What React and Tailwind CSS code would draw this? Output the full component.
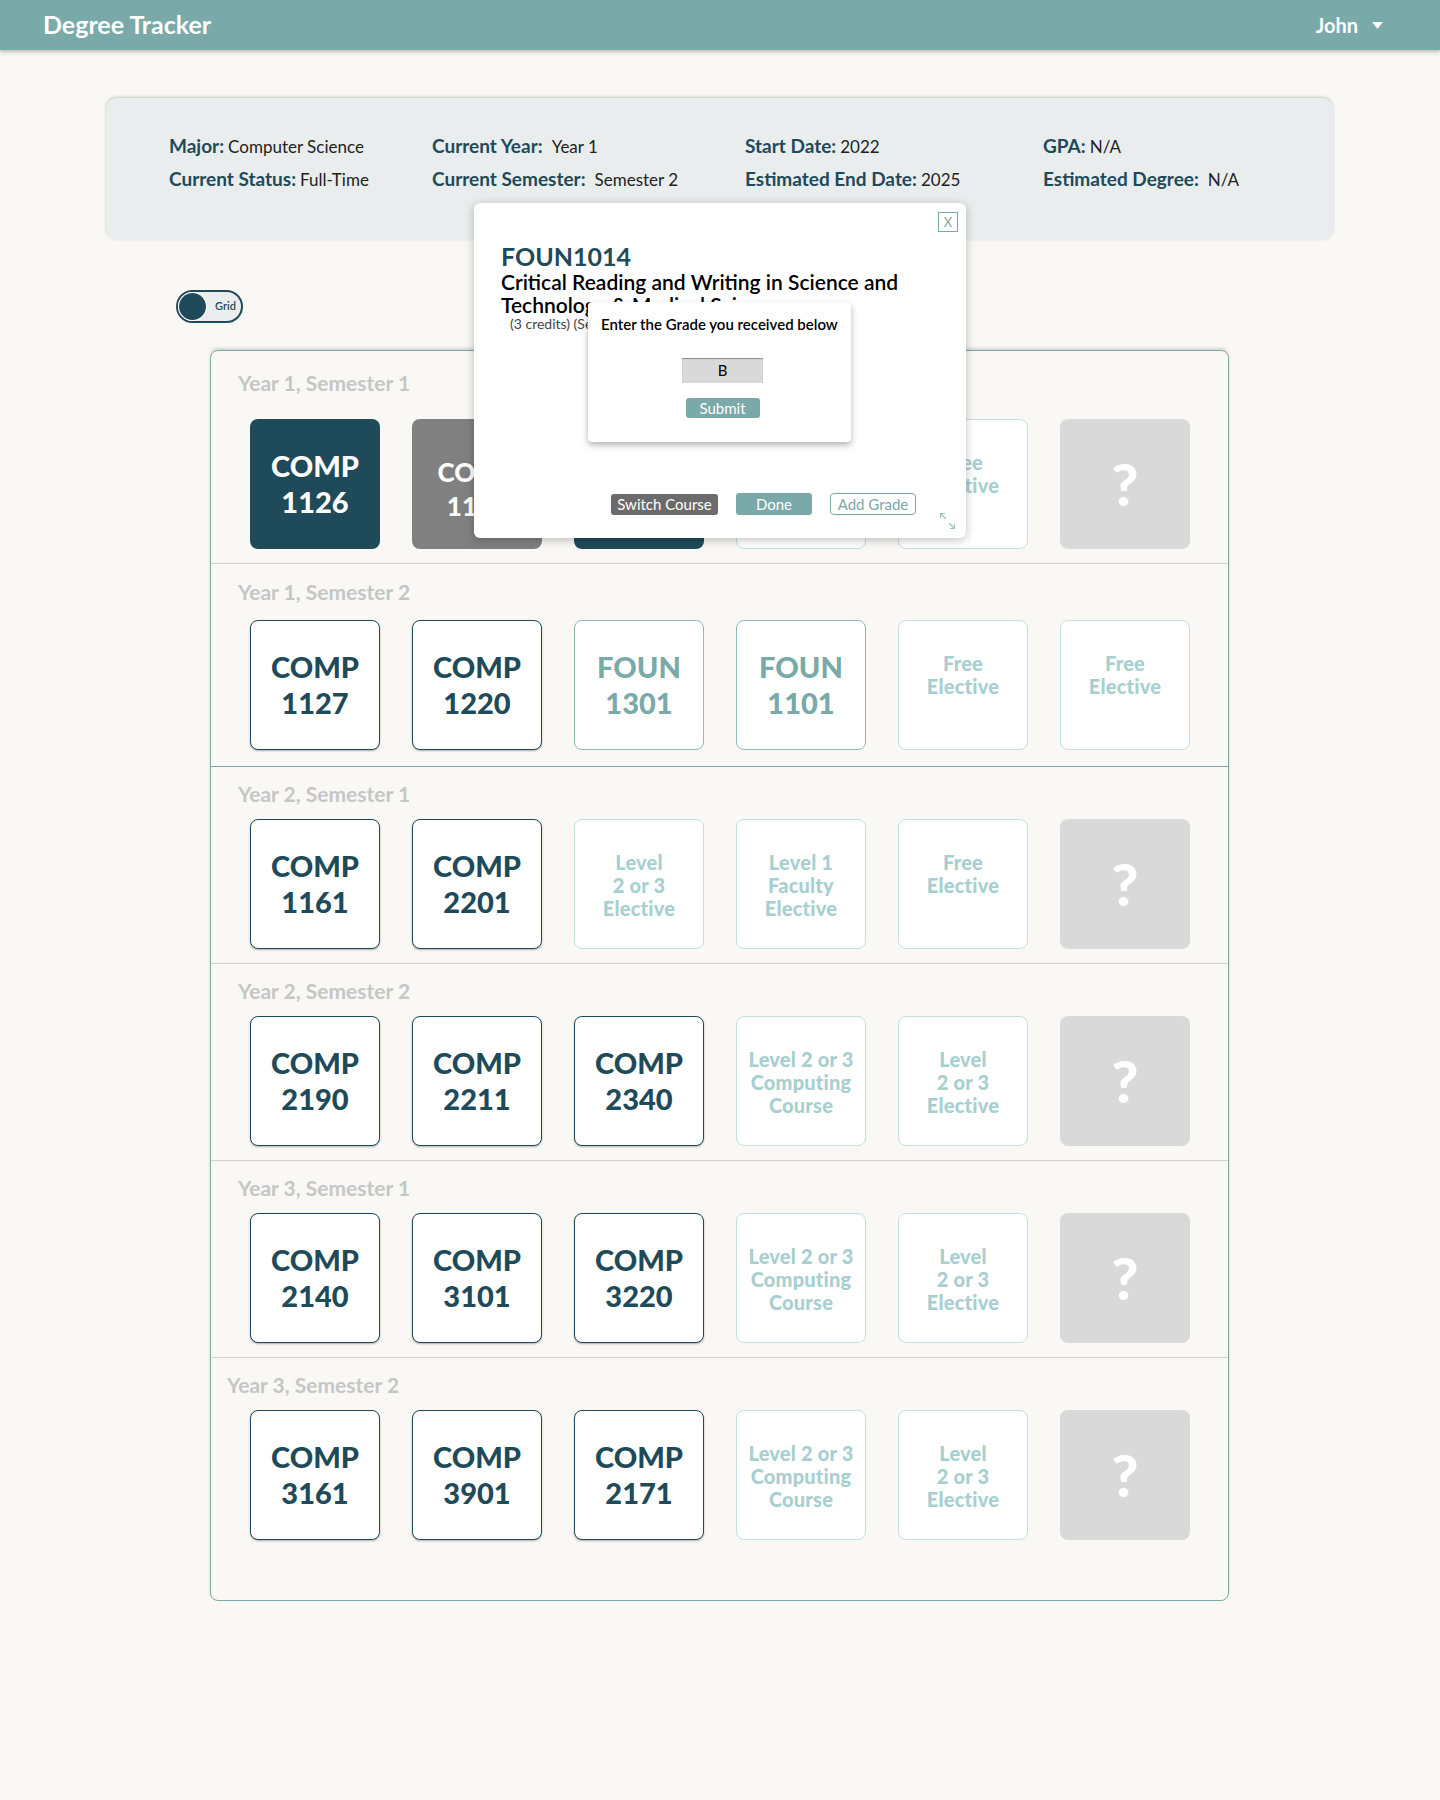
import React from "react";

const font = { fontFamily: "Lato, 'Open Sans', sans-serif" };

const semesters = [
  {
    label: "Year 1, Semester 1",
    first: true,
    cards: [
      { kind: "fill", lines: ["COMP", "1126"] },
      { kind: "gray", lines: ["COMP", "1128"] },
      { kind: "fill", lines: ["FOUN", "1014"] },
      { kind: "light", lines: ["Level 1", "Faculty", "Elective"] },
      { kind: "light", lines: ["Free", "Elective"] },
      { kind: "q" },
    ],
  },
  {
    label: "Year 1, Semester 2",
    divider: "teal",
    tall: true,
    cards: [
      { kind: "dark", lines: ["COMP", "1127"] },
      { kind: "dark", lines: ["COMP", "1220"] },
      { kind: "mid", lines: ["FOUN", "1301"] },
      { kind: "mid", lines: ["FOUN", "1101"] },
      { kind: "light", lines: ["Free", "Elective"] },
      { kind: "light", lines: ["Free", "Elective"] },
    ],
  },
  {
    label: "Year 2, Semester 1",
    cards: [
      { kind: "dark", lines: ["COMP", "1161"] },
      { kind: "dark", lines: ["COMP", "2201"] },
      { kind: "light", lines: ["Level", "2 or 3", "Elective"] },
      { kind: "light", lines: ["Level 1", "Faculty", "Elective"] },
      { kind: "light", lines: ["Free", "Elective"] },
      { kind: "q" },
    ],
  },
  {
    label: "Year 2, Semester 2",
    cards: [
      { kind: "dark", lines: ["COMP", "2190"] },
      { kind: "dark", lines: ["COMP", "2211"] },
      { kind: "dark", lines: ["COMP", "2340"] },
      { kind: "light", lines: ["Level 2 or 3", "Computing", "Course"] },
      { kind: "light", lines: ["Level", "2 or 3", "Elective"] },
      { kind: "q" },
    ],
  },
  {
    label: "Year 3, Semester 1",
    cards: [
      { kind: "dark", lines: ["COMP", "2140"] },
      { kind: "dark", lines: ["COMP", "3101"] },
      { kind: "dark", lines: ["COMP", "3220"] },
      { kind: "light", lines: ["Level 2 or 3", "Computing", "Course"] },
      { kind: "light", lines: ["Level", "2 or 3", "Elective"] },
      { kind: "q" },
    ],
  },
  {
    label: "Year 3, Semester 2",
    last: true,
    cards: [
      { kind: "dark", lines: ["COMP", "3161"] },
      { kind: "dark", lines: ["COMP", "3901"] },
      { kind: "dark", lines: ["COMP", "2171"] },
      { kind: "light", lines: ["Level 2 or 3", "Computing", "Course"] },
      { kind: "light", lines: ["Level", "2 or 3", "Elective"] },
      { kind: "q" },
    ],
  },
];

const CourseCard = ({ kind, lines = [] }) => {
  if (kind === "q") {
    return (
      <div className="w-[130px] h-[130px] rounded-[8px] bg-[#d9d9d9] flex items-center justify-center">
        <span className="text-white text-[58px] font-black leading-none">?</span>
      </div>
    );
  }
  if (kind === "light") {
    return (
      <div className="w-[130px] h-[130px] rounded-[8px] bg-white border border-[#c5dfe0] pt-[31px] flex flex-col items-center">
        {lines.map((l, i) => (
          <span key={i} className="text-[20px] leading-[23px] font-black tracking-[0.2px] text-[#a8cfd0] whitespace-nowrap">
            {l}
          </span>
        ))}
      </div>
    );
  }
  const styles = {
    fill: "bg-[#1e4a5a] text-white",
    gray: "bg-[#808080] text-white",
    dark: "bg-white border border-[#1e4a5a] text-[#1e4a5a] shadow-[0_1px_2px_rgba(0,0,0,0.3)]",
    mid: "bg-white border border-[#8fb9b9] text-[#7aa9a9]",
  };
  const small = kind === "gray";
  return (
    <div className={`w-[130px] h-[130px] rounded-[8px] flex flex-col items-center justify-center ${styles[kind]}`}>
      <div className={`flex flex-col items-center ${small ? "mt-[10px]" : ""}`}>
        {lines.map((l, i) => (
          <span
            key={i}
            className={`font-black ${small ? "text-[26px] leading-[34px]" : "text-[29px] leading-[36px]"}`}
          >
            {l}
          </span>
        ))}
      </div>
    </div>
  );
};

const Semester = ({ sem }) => {
  let pad = "pt-[15px]";
  let gap = "mb-[13px]";
  let bottom = "pb-[14px]";
  if (sem.first) {
    pad = "pt-[20px]";
    gap = "mb-[24px]";
  }
  if (sem.tall) {
    pad = "pt-[16px]";
    gap = "mb-[16px]";
    bottom = "pb-[16px]";
  }
  if (sem.last) bottom = "pb-[60px]";
  const border = sem.last
    ? ""
    : sem.divider === "teal"
    ? "border-b border-[#7aa9a9]"
    : "border-b border-[#d3d1cc]";
  return (
    <div className={`${pad} ${bottom} ${border}`}>
      <div
        className={`text-[21px] leading-[24px] font-bold text-[#c6c6c6] ${gap} ${
          sem.last ? "pl-[16px]" : "pl-[27px]"
        }`}
      >
        {sem.label}
      </div>
      <div className="flex gap-x-[32px] pl-[39px]">
        {sem.cards.map((c, i) => (
          <CourseCard key={i} {...c} />
        ))}
      </div>
    </div>
  );
};

const Info = ({ label, value, gap }) => (
  <div className="flex items-baseline whitespace-nowrap leading-[24px]">
    <span className="text-[19px] font-bold text-[#1e4a5a]">{label}</span>
    <span className={`text-[17px] text-[#222] ${gap ? "ml-[9px]" : "ml-[4px]"}`}>{value}</span>
  </div>
);

const ExpandIcon = () => (
  <svg width="17" height="18" viewBox="0 0 17 18" fill="none" stroke="#9cc3c3" strokeWidth="1.2" strokeLinecap="round">
    <path d="M1.5 1.5 L6.5 6.5" />
    <path d="M1.5 1.5 L1.5 5.5" />
    <path d="M1.5 1.5 L5.5 1.5" />
    <path d="M10.5 11.5 L15.5 16.5" />
    <path d="M15.5 16.5 L15.5 12.5" />
    <path d="M15.5 16.5 L11.5 16.5" />
  </svg>
);

const CourseModal = () => (
  <div className="absolute left-[474px] top-[203px] w-[492px] h-[335px] bg-white rounded-[6px] shadow-[0_2px_10px_rgba(0,0,0,0.25)] z-20 flex flex-col">
    <button className="absolute top-[9px] right-[8px] w-[20px] h-[20px] border border-[#7aa9a9] text-[#7aa9a9] text-[13px] leading-none flex items-center justify-center">
      X
    </button>

    <div className="pl-[27px] pt-[40px]">
      <div className="text-[25px] leading-[26px] font-bold text-[#1e4a5a]">FOUN1014</div>
      <div className="text-[21px] leading-[23px] font-semibold text-black mt-[1px]">
        Critical Reading and Writing in Science and
        <br />
        Technology &amp; Medical Sciences
      </div>
      <div className="ml-[9px] text-[14px] leading-[15px] text-[#444]">(3 credits) (Semester 1)</div>
    </div>

    <div className="absolute left-[114px] top-[99px] w-[263px] h-[140px] bg-white rounded-[4px] shadow-[0_3px_6px_rgba(0,0,0,0.3)] flex flex-col items-center pt-[12px]">
      <div className="w-full pl-[13px] text-[15px] leading-[20px] font-semibold text-black whitespace-nowrap">
        Enter the Grade you received below
      </div>
      <div className="mt-[24px] ml-[6px] w-[81px] h-[25px] bg-[#d9d9d9] shadow-[inset_0_1px_1px_rgba(0,0,0,0.35)] flex items-center justify-center text-[15px] text-black">
        B
      </div>
      <button className="mt-[15px] ml-[6px] w-[74px] h-[20px] rounded-[3px] bg-[#7aa9a9] text-white text-[15px] leading-none">
        Submit
      </button>
    </div>

    <div className="mt-auto pb-[23px] pl-[137px] flex items-center gap-[18px]">
      <button className="w-[107px] h-[21px] rounded-[3px] bg-[#6b6b6b] text-white text-[15px] leading-none whitespace-nowrap">
        Switch Course
      </button>
      <button className="w-[76px] h-[22px] rounded-[3px] bg-[#7aa9a9] text-white text-[15px] leading-none">
        Done
      </button>
      <button className="w-[86px] h-[22px] rounded-[4px] border border-[#7aa9a9] bg-white text-[#7aa9a9] text-[15px] leading-none whitespace-nowrap">
        Add Grade
      </button>
    </div>

    <div className="absolute right-[10px] bottom-[8px]">
      <ExpandIcon />
    </div>
  </div>
);

const App = () => {
  return (
    <div className="relative min-h-screen bg-[#f9f8f5]" style={font}>
      <header className="h-[50px] bg-[#7aa9a9] shadow-[0_2px_4px_rgba(0,0,0,0.25)] flex items-center justify-between pl-[43px] pr-[57px]">
        <span className="text-white text-[25px] font-bold">Degree Tracker</span>
        <span className="flex items-center gap-[14px] text-white text-[20px] font-bold">
          John
          <svg width="11" height="7" viewBox="0 0 11 7">
            <path d="M0 0 L11 0 L5.5 7 Z" fill="#ffffff" />
          </svg>
        </span>
      </header>

      <section className="mt-[48px] ml-[106px] w-[1227px] h-[142px] rounded-[10px] bg-[#e9eded] shadow-[0_-1px_3px_rgba(0,0,0,0.2)] pt-[36px] pl-[63px] grid grid-cols-[263px_313px_298px_1fr] content-start gap-y-[8px]">
        <Info label="Major:" value="Computer Science" />
        <Info label="Current Year:" value="Year 1" gap />
        <Info label="Start Date:" value="2022" />
        <Info label="GPA:" value="N/A" />
        <Info label="Current Status:" value="Full-Time" />
        <Info label="Current Semester:" value="Semester 2" gap />
        <Info label="Estimated End Date:" value="2025" />
        <Info label="Estimated Degree:" value="N/A" gap />
      </section>

      <div className="mt-[50px] ml-[176px] w-[67px] h-[33px] rounded-full border-2 border-[#1e4a5a] bg-[#e9eded] flex items-center pl-[1px]">
        <div className="w-[27px] h-[27px] rounded-full bg-[#1e4a5a] ring-1 ring-white" />
        <span className="ml-[9px] text-[11px] text-[#1e4a5a] font-semibold">Grid</span>
      </div>

      <main className="mt-[27px] ml-[210px] w-[1019px] rounded-[8px] border border-[#7aa9a9] shadow-[0_-2px_3px_rgba(0,0,0,0.15)]">
        {semesters.map((s, i) => (
          <Semester key={i} sem={s} />
        ))}
      </main>

      <CourseModal />
    </div>
  );
};

export default App;
